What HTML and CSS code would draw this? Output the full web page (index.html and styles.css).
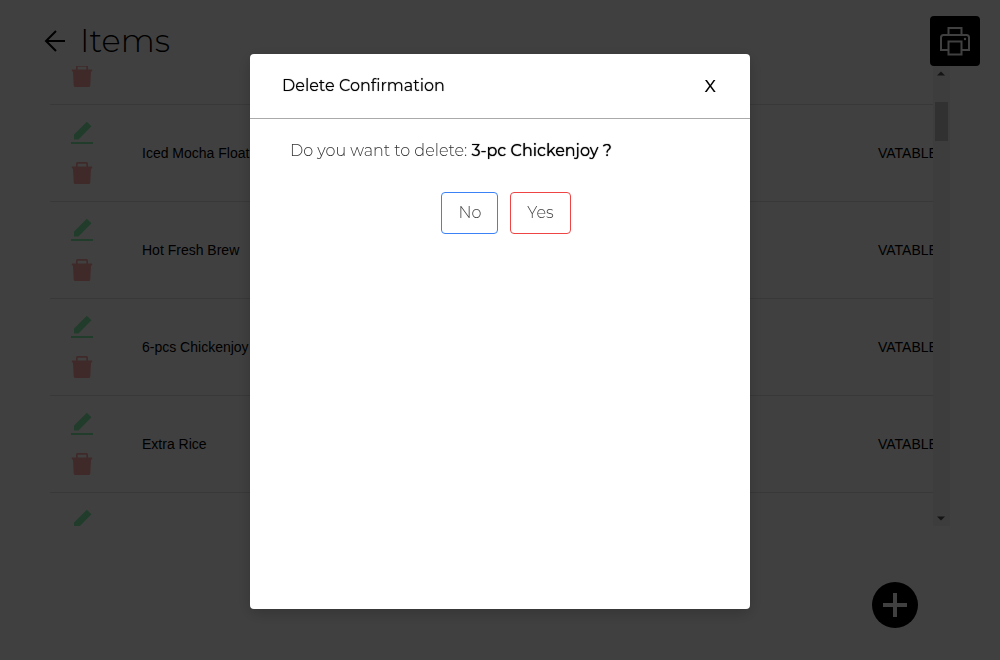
FILE: index.html
```html
<!DOCTYPE html>
<html lang="en">
<head>
<meta charset="utf-8">
<title>Items</title>
<link rel="stylesheet" href="styles.css">
</head>
<body>
<svg class="symbols" aria-hidden="true">
  <symbol id="pencil" viewBox="0 0 24 24">
    <path d="M16.800 .8l4.700 4.500L8.500 18.500H4V13.500zM1 21h22v2H1z"/>
  </symbol>
  <symbol id="trash" viewBox="0 0 24 24">
    <path fill-rule="evenodd" d="M7.500 0h9Q18 0 18 1.500V4.500h4.200v2H21L20.300 20.500Q20.200 22 18.700 22H5.300Q3.800 22 3.700 20.500L3 6.500H1.800v-2H6V1.500Q6 0 7.500 0zM7.700 1.700V4.500h8.600V1.700z"/>
  </symbol>
</svg>
<main class="page">
  <header class="topbar">
    <a class="back" href="#" aria-label="Back">
      <svg width="22" height="22" viewBox="0 0 22 22"><path d="M12 1L2 11l10 10M2 11h19"/></svg>
    </a>
    <h1 class="title">Items</h1>
    <button class="print" aria-label="Print">
      <svg width="50" height="50" viewBox="0 0 50 50">
        <path d="M18.500 19v-7h13v7M18 34h-7V21.500Q11 19 13.500 19h23Q39 19 39 21.500V34h-7"/>
        <path d="M18.500 25.500h13v13h-13z"/>
        <circle cx="35" cy="23" r="1.200"/>
      </svg>
    </button>
  </header>
  <section class="list">
    <div class="viewport">
      <table class="items">
        <colgroup><col class="col-actions"><col><col class="col-tax"></colgroup>
        <tbody>
          <tr>
            <td><div class="actions"><button class="edit" aria-label="Edit"><svg><use href="#pencil"/></svg></button><button class="remove" aria-label="Delete"><svg><use href="#trash"/></svg></button></div></td>
            <td></td><td></td>
          </tr>
          <tr>
            <td><div class="actions"><button class="edit" aria-label="Edit"><svg><use href="#pencil"/></svg></button><button class="remove" aria-label="Delete"><svg><use href="#trash"/></svg></button></div></td>
            <td>Iced Mocha Float</td><td>VATABLE</td>
          </tr>
          <tr>
            <td><div class="actions"><button class="edit" aria-label="Edit"><svg><use href="#pencil"/></svg></button><button class="remove" aria-label="Delete"><svg><use href="#trash"/></svg></button></div></td>
            <td>Hot Fresh Brew</td><td>VATABLE</td>
          </tr>
          <tr>
            <td><div class="actions"><button class="edit" aria-label="Edit"><svg><use href="#pencil"/></svg></button><button class="remove" aria-label="Delete"><svg><use href="#trash"/></svg></button></div></td>
            <td>6-pcs Chickenjoy</td><td>VATABLE</td>
          </tr>
          <tr>
            <td><div class="actions"><button class="edit" aria-label="Edit"><svg><use href="#pencil"/></svg></button><button class="remove" aria-label="Delete"><svg><use href="#trash"/></svg></button></div></td>
            <td>Extra Rice</td><td>VATABLE</td>
          </tr>
          <tr>
            <td><div class="actions"><button class="edit" aria-label="Edit"><svg><use href="#pencil"/></svg></button><button class="remove" aria-label="Delete"><svg><use href="#trash"/></svg></button></div></td>
            <td></td><td></td>
          </tr>
        </tbody>
      </table>
    </div>
    <div class="scrollbar" aria-hidden="true">
      <svg width="9" height="5" viewBox="0 0 9 5"><path d="M0 4.500h8L4 .5z"/></svg>
      <div class="track"><div class="thumb"></div></div>
      <svg width="9" height="5" viewBox="0 0 9 5"><path d="M0 .5h8L4 4.500z"/></svg>
    </div>
  </section>
  <button class="add" aria-label="Add item">
    <svg width="24" height="24" viewBox="0 0 24 24"><path d="M12 0v24M0 12h24"/></svg>
  </button>
</main>
<div class="overlay">
  <div class="dialog" role="dialog" aria-modal="true" aria-labelledby="dialog-title">
    <div class="dialog-head">
      <h2 class="dialog-title" id="dialog-title">Delete Confirmation</h2>
      <button class="close" aria-label="Close">X</button>
    </div>
    <div class="dialog-body">
      <p class="question">Do you want to delete: <strong>3-pc Chickenjoy ?</strong></p>
      <div class="choices">
        <button class="choice no">No</button>
        <button class="choice yes">Yes</button>
      </div>
    </div>
  </div>
</div>
</body>
</html>
```
FILE: styles.css
```css
* {
  box-sizing: border-box;
}

body {
  margin: 0;
  background: #fff;
  color: #000;
  font-family: Montserrat, Inter, sans-serif;
  font-weight: 300;
}

button {
  margin: 0;
  padding: 0;
  border: 0;
  background: none;
  font: inherit;
  cursor: pointer;
}

svg {
  display: block;
}

.symbols {
  position: absolute;
  width: 0;
  height: 0;
}

.page {
  display: flex;
  flex-direction: column;
  height: 100vh;
  overflow: hidden;
}

.topbar {
  display: flex;
  align-items: center;
  flex: none;
  padding: 16px 20px 0 44px;
}

.back svg {
  fill: none;
  stroke: #000;
  stroke-width: 2;
}

.title {
  flex: 1;
  margin: 0 0 0 14px;
  font-size: 32px;
  line-height: 40px;
  font-weight: 300;
}

.print {
  border-radius: 4px;
  background: #000;
}

.print svg {
  fill: none;
  stroke: #fff;
  stroke-width: 2;
}

.print circle {
  fill: #fff;
  stroke: none;
}

.list {
  display: flex;
  flex: 1;
  min-height: 0;
  margin: 0 50px 56px;
}

.viewport {
  flex: 1;
  min-width: 0;
  overflow: hidden;
}

.items {
  width: calc(100% + 40px);
  margin-top: -59px;
  border-collapse: collapse;
  table-layout: fixed;
  font-family: "Liberation Sans", Arial, sans-serif;
  font-size: 14px;
  font-weight: 400;
}

.col-actions {
  width: 92px;
}

.col-tax {
  width: 95px;
}

.items td {
  height: 97px;
  padding: 0;
  border-bottom: 1px solid #e0e0e0;
}

.actions {
  display: flex;
  flex-direction: column;
  align-items: flex-start;
  gap: 17px;
  padding: 2px 0 0 20px;
}

.actions svg {
  width: 24px;
  height: 24px;
}

.edit {
  fill: #86efac;
}

.remove {
  fill: #fca5a5;
}

.scrollbar {
  display: flex;
  flex-direction: column;
  align-items: center;
  width: 17px;
  padding: 5px 0;
  background: #f1f1f1;
}

.scrollbar svg {
  fill: #505050;
}

.track {
  flex: 1;
  padding-top: 26px;
}

.thumb {
  width: 13px;
  height: 39px;
  background: #c1c1c1;
}

.add {
  display: grid;
  flex: none;
  place-items: center;
  align-self: flex-end;
  width: 46px;
  height: 46px;
  margin: 0 82px 32px 0;
  border-radius: 50%;
  background: #000;
}

.add svg {
  stroke: #fff;
  stroke-width: 4;
}

.overlay {
  position: fixed;
  inset: 0;
  display: flex;
  justify-content: center;
  padding: 54px 16px 51px;
  background: rgba(0, 0, 0, 0.75);
}

.dialog {
  width: 500px;
  max-width: 100%;
  border-radius: 4px;
  background: #fff;
  box-shadow: 0 4px 16px rgba(0, 0, 0, 0.2);
  font-size: 16px;
  line-height: 24px;
}

.dialog-head {
  display: flex;
  align-items: center;
  justify-content: space-between;
  padding: 20px 32px;
  border-bottom: 1px solid #aaa;
}

.dialog-title {
  margin: 0;
  font-size: 16px;
  font-weight: 400;
  line-height: 24px;
  text-shadow: 0 0 1px rgba(0, 0, 0, 0.5);
}

.close {
  padding: 0 2px;
  font-size: 17px;
  font-weight: 500;
}

.dialog-body {
  padding: 20px 40px;
}

.question {
  margin: 0 0 29px;
  color: #333;
}

.question strong {
  color: #000;
  font-weight: 400;
  text-shadow: 0 0 1px #000;
}

.choices {
  display: flex;
  justify-content: center;
  gap: 12px;
  padding-left: 12px;
}

.choice {
  height: 42px;
  padding: 0 16px;
  border: 1px solid;
  border-radius: 4px;
  color: #444;
}

.no {
  border-color: #3b82f6;
}

.yes {
  border-color: #ef4444;
}
```
